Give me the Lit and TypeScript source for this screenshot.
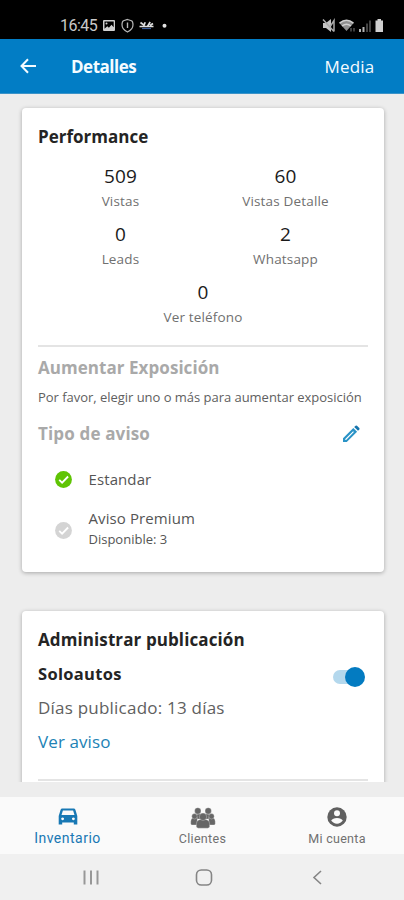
import { LitElement, html, css } from "lit";
import { customElement } from "lit/decorators.js";

@customElement("app-root")
export class AppRoot extends LitElement {
  static styles = css`
    :host {
      display: flex;
      flex-direction: column;
      width: 404px;
      height: 900px;
      overflow: hidden;
      background: #ededed;
      font-family: "Open Sans", "Noto Sans", sans-serif;
      color: #242424;
    }
    * { box-sizing: border-box; }
    svg { display: block; flex: none; }
    .status {
      flex: none;
      height: 39px;
      background: #000;
      display: flex;
      align-items: center;
      justify-content: space-between;
      padding: 12px 20px 0 60px;
      color: #c9c9c9;
    }
    .status-group { display: flex; align-items: center; }
    .clock { font: 400 16px/20px Roboto, sans-serif; width: 42px; letter-spacing: -0.5px; white-space: nowrap; }
    .bar {
      flex: none;
      height: 55px;
      background: #027dc5;
      color: #f4fbff;
      display: flex;
      align-items: center;
      padding: 0 29.5px 0 20px;
      border-bottom: 1px solid #3b93c8;
    }
    .bar-title { font-size: 17px; font-weight: 700; margin-left: 34px; flex: 1; letter-spacing: -0.5px; }
    .bar-action { font-size: 17px; font-weight: 500; letter-spacing: 0.2px; }
    .scroll { height: 688px; flex: none; overflow: hidden; padding: 14px 20px 0 22px; }
    .card {
      width: 362px;
      background: #fff;
      border-radius: 4px;
      padding: 16px;
      box-shadow: 0 1px 4px rgba(0, 0, 0, 0.3);
    }
    .performance { height: 464px; }
    .manage { height: 200px; margin-top: 39px; }
    .heading { font-size: 17px; line-height: 26px; font-weight: 700; white-space: nowrap; }
    .stats { display: grid; grid-template-columns: 1fr 1fr; margin-top: 11px; }
    .stat { height: 58px; text-align: center; }
    .stat.wide { grid-column: 1 / 3; }
    .value { font-size: 19px; line-height: 30px; font-weight: 500; letter-spacing: 0.15px; color: #1a1a1a; }
    .label { font-size: 13.5px; line-height: 20px; color: #707070; letter-spacing: 0.17px; }
    .divider { height: 2px; background: #e4e4e4; }
    .stats + .divider { margin-top: 10px; }
    .muted { color: #a9a9a9; }
    .exposure { margin-top: 8px; letter-spacing: 0.05px; }
    .hint { font-size: 13px; line-height: 20px; margin-top: 6px; color: #606060; white-space: nowrap; letter-spacing: -0.03px; }
    .type-row { display: flex; justify-content: space-between; align-items: center; margin-top: 14px; padding-right: 8px; }
    .type-row .heading { letter-spacing: 0.15px; }
    .option { display: flex; align-items: center; padding-left: 16.5px; color: #555; }
    .option svg { margin-right: 17px; }
    .standard { height: 24px; margin-top: 20px; }
    .premium { height: 44px; margin-top: 16px; }
    .premium svg { margin-top: 2px; }
    .premium .text { margin-top: -2px; }
    .name { font-size: 15px; line-height: 22px; letter-spacing: 0.1px; }
    .available { font-size: 13px; line-height: 20px; }
    .title-b { letter-spacing: 0.1px; }
    .portal { display: flex; justify-content: space-between; align-items: center; margin-top: 8px; height: 26px; }
    .portal .heading { font-size: 16.5px; letter-spacing: 0.3px; }
    .switch { width: 34px; height: 21px; display: flex; align-items: center; justify-content: flex-end; margin: 6px 3.5px 0 0; }
    .track { width: 24px; height: 14px; border-radius: 7px 0 0 7px; background: #b4d8ed; margin-right: -12px; }
    .thumb { width: 20px; height: 20px; border-radius: 50%; background: #037bc1; }
    .days { font-size: 17px; line-height: 26px; margin-top: 8px; color: #606060; letter-spacing: 0.22px; }
    .link { font-size: 17px; line-height: 26px; margin-top: 8px; color: #2182b5; letter-spacing: 0.1px; }
    .manage .divider { margin-top: 24px; }
    .gap { height: 15px; flex: none; }
    .tabs { flex: none; height: 57px; background: #fafafa; display: grid; grid-template-columns: 135px 135px 134px; font-family: Roboto, sans-serif; }
    .tab { display: flex; flex-direction: column; align-items: center; padding-top: 10px; color: #707070; font-size: 12.5px; }
    .tab span { line-height: 18px; margin-top: 3px; letter-spacing: 0.3px; }
    .tab.active { color: #1878b4; font-size: 14px; }
    .tab.active span { letter-spacing: 0.5px; margin-top: 2px; }
    .people { margin-bottom: -2px; }
    .system { flex: 1; background: #f0f0f0; }
  `;

  private stat(value: string, label: string, wide = false) {
    return html`<div class="stat ${wide ? "wide" : ""}">
      <div class="value">${value}</div>
      <div class="label">${label}</div>
    </div>`;
  }

  private check(color: string, tick: string) {
    return html`<svg width="17" height="17" viewBox="0 0 17 17">
      <circle cx="8.5" cy="8.5" r="8.4" fill=${color} />
      <path d="M4.200 8.800l2.900 2.900 6-6.200" fill="none" stroke=${tick} stroke-width="1.800" />
    </svg>`;
  }

  render() {
    return html`
      <div class="status">
        <div class="status-group">
          <span class="clock">16:45</span>
          <svg width="68" height="16" viewBox="0 0 68 16">
            <path fill="#d0d0d0" fill-rule="evenodd" d="M2 2h10q1 0 1 1v9q0 1-1 1H2q-1 0-1-1V3q0-1 1-1zm.5 1.5v7.300l2.800-2.500 1.600 1.400 2.600-2.900 2.200 2.400V3.500z" />
            <circle cx="4.500" cy="5.500" r="1" fill="#d0d0d0" />
            <path d="M25.500 1.500l4 1.300q1.500.7 1.500 4 0 4.700-5.500 7.200-5.500-2.500-5.500-7.200 0-3.300 1.500-4z" fill="none" stroke="#b8b8b8" stroke-width="1.200" />
            <path d="M25.500 4.500v5.500" stroke="#b8b8b8" stroke-width="1.400" />
            <path d="M38.500 4.500l3.500 2.700 1.200-3M45.500 8.500l2.700-4.500M48 7.500l3-2M37.500 8.500h6.500M44 8.500h7.500" fill="none" stroke="#dedede" stroke-width="1.700" />
            <path d="M40 10.500h9" stroke="#3d5f9c" stroke-width="1.200" />
            <circle cx="62.500" cy="7.800" r="2" fill="#e2e2e2" />
          </svg>
        </div>
        <svg width="62" height="16" viewBox="0 0 62 16">
          <path d="M1 5h3l5-4v13l-5-4H1z" fill="#c4c4c4" />
          <path d="M1 1.500l11 12M8.500 8l3.500-5.500v11" fill="none" stroke="#aaa" stroke-width="1.500" />
          <path d="M17.500 5.200Q24.500-.6 31.500 5.200L24.500 13z" fill="#8f8f8f" />
          <path d="M17.500 5.200Q24.500-.6 31.500 5.200M20 8q4.500-3.500 9 0" fill="none" stroke="#d0d0d0" stroke-width="1.500" />
          <path d="M29 10v3.500M32 10v3.500" stroke="#666" stroke-width="1.200" />
          <path d="M38 11v3M41.500 9v5" stroke="#b5b5b5" stroke-width="2" />
          <path d="M45 5.500v8.500M48 2.500v11.500" stroke="#555" stroke-width="1.600" />
          <path d="M53.500 2.500h2V1h3.500v1.500h2v11.500h-7.500z" fill="#d0d0d0" />
        </svg>
      </div>

      <div class="bar">
        <svg width="17" height="16" viewBox="0 0 17 16">
          <path d="M16 8H1.800M8 1.200L1.500 8 8 14.800" fill="none" stroke="#f4fbff" stroke-width="2" />
        </svg>
        <div class="bar-title">Detalles</div>
        <div class="bar-action">Media</div>
      </div>

      <div class="scroll">
        <section class="card performance">
          <div class="heading">Performance</div>
          <div class="stats">
            ${this.stat("509", "Vistas")} ${this.stat("60", "Vistas Detalle")}
            ${this.stat("0", "Leads")} ${this.stat("2", "Whatsapp")}
            ${this.stat("0", "Ver teléfono", true)}
          </div>
          <div class="divider"></div>
          <div class="heading muted exposure">Aumentar Exposición</div>
          <div class="hint">Por favor, elegir uno o más para aumentar exposición</div>
          <div class="type-row">
            <div class="heading muted">Tipo de aviso</div>
            <svg width="18" height="18" viewBox="0 0 18 18">
              <path fill="#2a93c6" fill-rule="evenodd" d="M1 17v-3.800L11.300 2.900l3.800 3.800L4.800 17zM3.300 14.900h.8l7.800-7.900-.8-.8-7.800 7.900z" />
              <path fill="#1574ad" d="M12.200 2L13.600.7q.7-.6 1.400 0l2.300 2.300q.6.700 0 1.400L16 5.800z" />
            </svg>
          </div>
          <div class="option standard">
            ${this.check("#5fc404", "#ffffff")}
            <div class="name">Estandar</div>
          </div>
          <div class="option premium">
            ${this.check("#d4d4d4", "#ffffff")}
            <div class="text">
              <div class="name">Aviso Premium</div>
              <div class="available">Disponible: 3</div>
            </div>
          </div>
        </section>

        <section class="card manage">
          <div class="heading title-b">Administrar publicación</div>
          <div class="portal">
            <div class="heading">Soloautos</div>
            <div class="switch"><div class="track"></div><div class="thumb"></div></div>
          </div>
          <div class="days">Días publicado: 13 días</div>
          <div class="link">Ver aviso</div>
          <div class="divider"></div>
        </section>
      </div>
      <div class="gap"></div>

      <nav class="tabs">
        <div class="tab active">
          <svg width="20" height="20" viewBox="0 0 20 20">
            <path fill="#1878b4" fill-rule="evenodd" d="M4.300 1.500h11.400q1.300 0 1.700 1.300L19.300 9v8.600h-3.500V15.500H4.200v2.100H.7V9l1.900-6.200Q3 1.500 4.300 1.500zM4.900 3.600L3.500 8h13l-1.400-4.400zM4.600 10.400a1.400 1.400 0 1 0 .01 0zM15.400 10.400a1.400 1.400 0 1 0 .01 0z" />
          </svg>
          <span>Inventario</span>
        </div>
        <div class="tab">
          <svg class="people" width="26" height="22" viewBox="0 0 26 22">
            <g fill="#666" stroke="#fafafa" stroke-width=".3">
              <path d="M4.500 12V9.500Q5 7 8 7h10q3 0 3.500 2.500V12z" />
              <circle cx="7.800" cy="3.900" r="3.200" /><circle cx="18.200" cy="3.900" r="3.200" />
              <path d="M.7 16.500q-.3-5.500 3-6h3.600v7.500H2q-1.200 0-1.300-1.500zM25.300 16.500q.3-5.500-3-6h-3.600v7.500H24q1.200 0 1.300-1.500z" />
              <circle cx="4.500" cy="9.300" r="2.700" /><circle cx="21.500" cy="9.300" r="2.700" />
              <path d="M6.300 19.500q-.4-6.500 3.700-7h6q4.100.5 3.700 7-.3 1.700-2 1.700H8.300q-1.700 0-2-1.700z" />
              <circle cx="13" cy="9.800" r="3.700" />
            </g>
          </svg>
          <span>Clientes</span>
        </div>
        <div class="tab">
          <svg width="20" height="20" viewBox="0 0 20 20">
            <circle cx="10" cy="10" r="9.700" fill="#606060" />
            <circle cx="10" cy="6.300" r="3" fill="#fafafa" />
            <path d="M4.200 13.600q1.500-2.600 5.800-2.600t5.800 2.600Q13.700 16.700 10 16.700t-5.800-3.100z" fill="#fafafa" />
          </svg>
          <span>Mi cuenta</span>
        </div>
      </nav>
      <div class="system">
        <svg width="404" height="45" viewBox="0 0 404 45">
          <path d="M84.500 16.500v14M91 16.500v14M97.500 16.500v14" stroke="#979797" stroke-width="2" />
          <rect x="196.500" y="16" width="15" height="15" rx="4.800" fill="none" stroke="#858585" stroke-width="1.600" />
          <path d="M321 17l-7 6.500 7 6.500" fill="none" stroke="#858585" stroke-width="1.600" />
        </svg>
      </div>
    `;
  }
}
